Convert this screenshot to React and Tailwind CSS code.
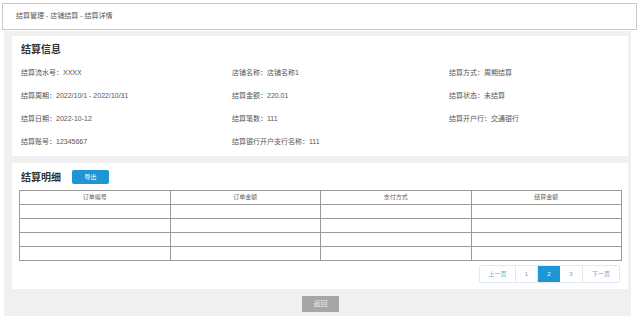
const info = [
  ['结算流水号：XXXX', '店铺名称：店铺名称1', '结算方式：周期结算'],
  ['结算周期：2022/10/1 - 2022/10/31', '结算金额：220.01', '结算状态：未结算'],
  ['结算日期：2022-10-12', '结算笔数：111', '结算开户行：交通银行'],
  ['结算账号：12345667', '结算银行开户支行名称：111', ''],
];

const headers = ['订单编号', '订单金额', '支付方式', '结算金额'];

export default function App() {
  return (
    <div
      className="w-[640px] h-[320px] bg-white pt-[3px] pl-[2px] text-[#555]"
      style={{ fontFamily: '"Liberation Sans", "Noto Sans CJK SC", sans-serif' }}
    >
      {/* Breadcrumb */}
      <div className="w-[635px] h-[27px] border border-[#c8c8c8] flex items-center pl-[13px] text-[7px] text-[#555]">
        结算管理 - 店铺结算 - 结算详情
      </div>

      {/* Content */}
      <div className="ml-[2px] mt-[1px] w-[627px] h-[285px] bg-[#f0f0f0] px-[8px] pt-[5px]">
        {/* Info card */}
        <div className="w-[616px] h-[120px] bg-white pl-[9px] pt-[6px]">
          <h3 className="text-[10px] font-bold text-[#333] leading-[16px]">结算信息</h3>
          <div className="mt-[10px] grid grid-cols-[211px_217px_1fr] auto-rows-[23px] text-[7px] leading-[10px]">
            {info.flat().map((t, i) => (
              <span key={i}>{t}</span>
            ))}
          </div>
        </div>

        {/* Detail card */}
        <div className="mt-[7px] w-[616px] h-[126px] bg-white px-[7px] pt-[6px]">
          <div className="flex items-center h-[16px] pl-[2px]">
            <h3 className="text-[10px] font-bold text-[#333]">结算明细</h3>
            <button className="ml-[11px] w-[37px] h-[14px] bg-[#1e95d4] rounded-[2px] text-white text-[6px] flex items-center justify-center">
              导出
            </button>
          </div>
          <table className="mt-[5px] w-[603px] border-collapse text-[6px] text-[#666]">
            <thead>
              <tr className="h-[14px]">
                {headers.map((h) => (
                  <th key={h} className="border border-[#999] font-normal w-1/4">{h}</th>
                ))}
              </tr>
            </thead>
            <tbody>
              {[0, 1, 2, 3].map((r) => (
                <tr key={r} className="h-[14px]">
                  {headers.map((h) => (
                    <td key={h} className="border border-[#999]"></td>
                  ))}
                </tr>
              ))}
            </tbody>
          </table>
          <div className="mt-[4px] flex justify-end pr-[1px]">
            <div className="flex h-[18px] border border-[#e3e8ee] rounded-[2px] text-[6px] text-[#6aa6cf]">
              <span className="w-[36px] flex items-center justify-center border-r border-[#e3e8ee]">上一页</span>
              <span className="w-[22px] flex items-center justify-center border-r border-[#e3e8ee]">1</span>
              <span className="w-[22px] flex items-center justify-center bg-[#1e95d4] text-white">2</span>
              <span className="w-[23px] flex items-center justify-center border-r border-[#e3e8ee]">3</span>
              <span className="w-[36px] flex items-center justify-center">下一页</span>
            </div>
          </div>
        </div>

        {/* Back button */}
        <div className="mt-[7px] flex pl-[290px]">
          <button className="w-[37px] h-[16px] bg-[#a6a6a6] text-[#eee] text-[7px] flex items-center justify-center">
            返回
          </button>
        </div>
      </div>
    </div>
  );
}
